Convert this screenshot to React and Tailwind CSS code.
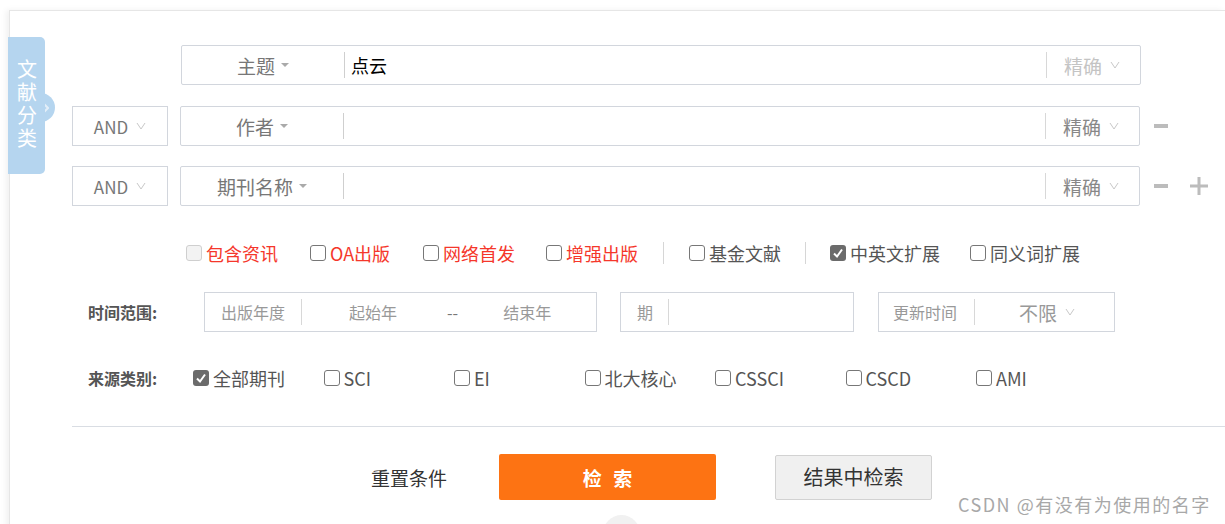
import React from "react";

const font = { fontFamily: '"Noto Sans CJK SC", "Noto Sans", sans-serif' };

function Caret() {
  return <span className="inline-block ml-[6px] w-0 h-0 border-x-[4px] border-x-transparent border-t-[4px] border-t-[#aaa] align-middle" />;
}

function Vee({ color = "#c8c8c8" }) {
  return (
    <svg width="10" height="8" viewBox="0 0 10 8" className="ml-[8px]">
      <polyline points="1,1 5,7 9,1" fill="none" stroke={color} strokeWidth="1" />
    </svg>
  );
}

function Box({ checked, disabled }) {
  if (checked) {
    return (
      <span className="w-[16px] h-[16px] rounded-[3px] bg-[#6b6b6b] flex items-center justify-center shrink-0">
        <svg width="12" height="12" viewBox="0 0 12 12">
          <polyline points="2,6.5 5,9.5 10,2.5" fill="none" stroke="#fff" strokeWidth="2" />
        </svg>
      </span>
    );
  }
  return (
    <span
      className={`w-[16px] h-[16px] rounded-[3px] border shrink-0 ${
        disabled ? "border-[#cfcfcf] bg-[#f3f3f3]" : "border-[#777] bg-white"
      }`}
    />
  );
}

function Check({ label, checked, disabled, red }) {
  return (
    <label className="flex items-center gap-[4px]">
      <Box checked={checked} disabled={disabled} />
      <span className={red ? "text-[#f5372b]" : "text-[#555]"}>{label}</span>
    </label>
  );
}

function Field({ name, value, light }) {
  return (
    <div className="w-[960px] h-[40px] border border-[#d2d6dd] rounded-[2px] flex items-center">
      <div className="w-[162px] flex items-center justify-center text-[19px] text-[#777]">
        {name}
        <Caret />
      </div>
      <span className="w-px h-[26px] bg-[#cfcfcf]" />
      <div className="flex-1 pl-[6px] text-[18px] text-black">{value}</div>
      <span className="w-px h-[26px] bg-[#d8d8d8]" />
      <div className={`w-[93px] pl-[17px] flex items-center text-[19px] ${light ? "text-[#c4c4c4]" : "text-[#888]"}`}>
        精确
        <Vee />
      </div>
    </div>
  );
}

function AndBox() {
  return (
    <div className="w-[96px] h-[40px] border border-[#d2d6dd] flex items-center justify-center text-[17px] text-[#777] mr-[12px]">
      AND
      <Vee />
    </div>
  );
}

function Minus() {
  return <span className="ml-[14px] w-[14px] h-[4px] bg-[#bcbcbc]" />;
}

export default function App() {
  const sources = [
    { label: "全部期刊", checked: true },
    { label: "SCI" },
    { label: "EI" },
    { label: "北大核心" },
    { label: "CSSCI" },
    { label: "CSCD" },
    { label: "AMI" },
  ];

  return (
    <div className="w-full h-[524px] bg-white relative overflow-hidden" style={font}>
      <div className="mt-[10px] ml-[9px] h-[600px] border-t border-l border-[#e6e6e6] shadow-[-3px_0_6px_rgba(0,0,0,0.06)] pl-[62px] pt-[34px] leading-none">
        {/* 检索行 */}
        <div className="flex items-center">
          <div className="w-[109px]" />
          <Field name="主题" value="点云" light />
        </div>
        <div className="flex items-center mt-[21px]">
          <AndBox />
          <Field name="作者" />
          <Minus />
        </div>
        <div className="flex items-center mt-[20px]">
          <AndBox />
          <Field name="期刊名称" />
          <Minus />
          <svg width="18" height="18" viewBox="0 0 18 18" className="ml-[22px]">
            <rect x="7.5" y="0" width="3" height="18" fill="#bcbcbc" />
            <rect x="0" y="7.5" width="18" height="3" fill="#bcbcbc" />
          </svg>
        </div>

        {/* 选项 */}
        <div className="flex items-center ml-[114px] mt-[36px] h-[22px] text-[18px]">
          <Check label="包含资讯" disabled red />
          <span className="ml-[32px]"><Check label="OA出版" red /></span>
          <span className="ml-[33px]"><Check label="网络首发" red /></span>
          <span className="ml-[31px]"><Check label="增强出版" red /></span>
          <span className="mx-[25px] w-px h-[22px] bg-[#d6d6d6]" />
          <Check label="基金文献" />
          <span className="mx-[24px] w-px h-[22px] bg-[#d6d6d6]" />
          <Check label="中英文扩展" checked />
          <span className="ml-[30px]"><Check label="同义词扩展" /></span>
        </div>

        {/* 时间范围 */}
        <div className="flex items-center mt-[28px] pl-[16px] text-[16px]">
          <div className="w-[116px] font-bold text-[#555]">时间范围:</div>
          <div className="w-[393px] h-[40px] border border-[#d2d6dd] flex items-center text-[#999]">
            <span className="pl-[16px] w-[96px]">出版年度</span>
            <span className="w-px h-[26px] bg-[#d8d8d8]" />
            <span className="ml-[47px]">起始年</span>
            <span className="ml-[50px] text-[#777]">--</span>
            <span className="ml-[45px]">结束年</span>
          </div>
          <div className="ml-[23px] w-[234px] h-[40px] border border-[#d2d6dd] flex items-center text-[#999]">
            <span className="pl-[16px] w-[47px]">期</span>
            <span className="w-px h-[26px] bg-[#d8d8d8]" />
          </div>
          <div className="ml-[24px] w-[237px] h-[40px] border border-[#d2d6dd] flex items-center text-[#999]">
            <span className="pl-[14px] w-[95px]">更新时间</span>
            <span className="w-px h-[26px] bg-[#d8d8d8]" />
            <span className="ml-[44px] text-[19px] flex items-center">
              不限
              <Vee />
            </span>
          </div>
        </div>

        {/* 来源类别 */}
        <div className="flex items-center mt-[35px] pl-[16px] h-[22px]">
          <div className="w-[105px] font-bold text-[16px] text-[#555]">来源类别:</div>
          {sources.map((s) => (
            <div key={s.label} className="w-[130.5px] text-[18px]">
              <Check label={s.label} checked={s.checked} />
            </div>
          ))}
        </div>

        <div className="mt-[37px] h-px bg-[#d9dde3]" />

        {/* 按钮 */}
        <div className="flex items-center mt-[27px]">
          <span className="ml-[299px] text-[19px] text-[#333]">重置条件</span>
          <button className="ml-[52px] w-[217px] h-[46px] bg-[#fd7313] rounded-[2px] text-[19px] text-white font-bold tracking-[0.6em] pl-[0.6em]">
            检索
          </button>
          <button className="ml-[59px] w-[157px] h-[45px] bg-[#f0f0f0] border border-[#d2d2d2] rounded-[2px] text-[20px] text-[#333]">
            结果中检索
          </button>
        </div>
      </div>

      {/* 文献分类 */}
      <div className="absolute left-[26px] top-[93px] w-[29px] h-[29px] rounded-full bg-[#b5d5ef] flex items-center justify-end pr-[6px]">
        <svg width="6" height="10" viewBox="0 0 6 10">
          <polyline points="1,1 5,5 1,9" fill="none" stroke="#e3eef8" strokeWidth="2" />
        </svg>
      </div>
      <div className="absolute left-[8px] top-[37px] w-[37px] h-[137px] bg-[#b5d5ef] rounded-r-[5px] flex items-center justify-center text-white text-[20px]">
        <span className="[writing-mode:vertical-rl] [text-orientation:upright] tracking-[3px] leading-none -mt-[2px]">文献分类</span>
      </div>

      <div className="absolute left-[603px] top-[515px] w-[37px] h-[37px] rounded-full bg-[#f1f1f1]" />
      <div className="absolute left-[958px] top-[495px] text-[18px] tracking-[1.5px] text-[#a8a8a8] leading-none [text-shadow:0_0_2px_#fff]">
        CSDN @有没有为使用的名字
      </div>
    </div>
  );
}
